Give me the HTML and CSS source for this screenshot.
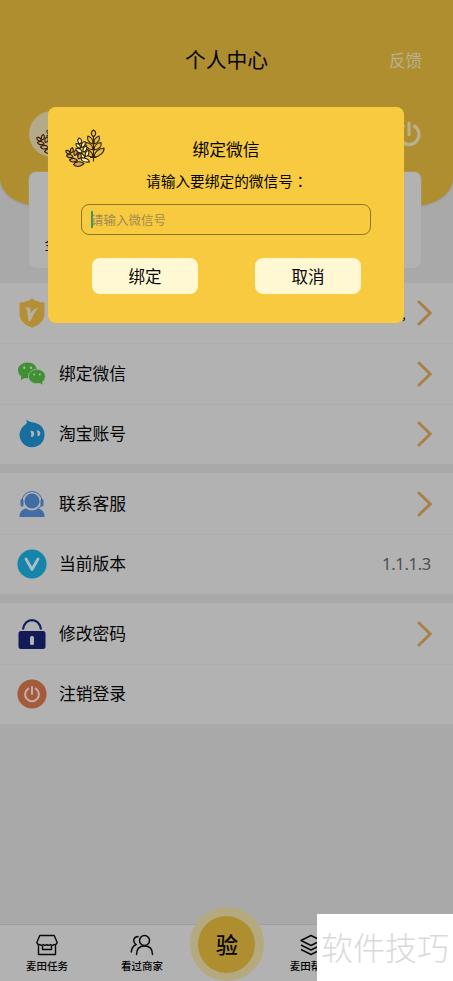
FILE: index.html
```html
<!DOCTYPE html>
<html lang="zh-CN">
<head>
<meta charset="utf-8">
<title>个人中心</title>
<link rel="stylesheet" href="styles.css">
</head>
<body>
<svg class="defs" width="0" height="0" aria-hidden="true">
  <symbol id="chevron" viewBox="0 0 16 26"><path d="M2 2 L13.2 13 L2 24" fill="none" stroke="#a98148" stroke-width="3" stroke-linecap="round" stroke-linejoin="miter"/></symbol>
  <symbol id="wheat" viewBox="0 0 40 40">
    <g stroke="#2b2108" stroke-width="1.1" stroke-linejoin="round" stroke-linecap="round">
      <g class="leaf-gold">
        <path d="M28.500 9C25 6 26 3.500 28.500 2C31 3.500 32 6 28.500 9ZM28 16C23 14.500 21.500 11 23 8C26 9 28.500 12 28 16ZM29 16C34 14.500 35.500 11 34 8C31 9 28.500 12 29 16ZM28 22C22 21 20 18 21 14.500C25 15 28 18 28 22ZM29 22C35 21 37 18 36 14.500C32 15 29 18 29 22ZM28 29C22 28.500 19 25 19.500 21C24 21 28 24.500 28 29ZM29 29C35 28.500 39.500 24 39 20C33 20.500 29 24.500 29 29Z"/>
        <path d="M28.500 8V33M25.500 29.500H31" fill="none"/>
      </g>
      <g fill="#fff3c4">
        <path d="M15 16C12 14.500 12.500 11.500 14 10C17 11 17.500 14 15 16ZM15.500 20C12 20 10.500 17.500 11 15.500C14 15.500 15.500 17.500 15.500 20ZM16.500 19.500C16 16 17.500 14 20 13.500C21 16 19.500 19 16.500 19.500ZM17 25C12 25 10.500 22.500 11 20.500C15 20 17 22 17 25ZM18 24C17.500 20 19 18.500 21.500 18C22.500 21 21 23.500 18 24ZM20 30C14 30.500 12 28 12 25.500C16 24.500 19.500 26.500 20 30ZM20.500 28.500C19.500 25 21 23 23.500 22.500C24.500 25.500 23.500 28 20.500 28.500ZM24.500 34C18 34.500 16 32.500 16 30C20 29.500 24 31 24.500 34Z"/>
      </g>
      <g fill="#dca067">
        <path d="M5 26C1.500 26 .500 24 1 22.500C4 22 5.500 24 5 26ZM6 25C4.500 22 5.500 20.500 7.500 19.500C9 22 8.500 24 6 25ZM8 29C4 30.500 2 29 1.500 27.500C4 25.500 7 26.500 8 29ZM9.500 27.500C8 24.500 9.500 22.500 11.500 22C13 24.500 12 27 9.500 27.500ZM12.500 32.500C8.500 35 5.500 34 4.500 32C7 29.500 10.500 30 12.500 32.500ZM13.500 31C12 28 13.500 26 15.500 25.500C17 28 16.500 30 13.500 31ZM19 35.500C15 39.500 11 39 8.500 36.500C11 33 16 33 19 35.500Z"/>
      </g>
    </g>
  </symbol>
</svg>
<div class="screen">
  <header class="hero">
    <div class="topbar">
      <span></span>
      <h1 class="title">个人中心</h1>
      <span class="feedback">反馈</span>
    </div>
    <div class="profile">
      <div class="avatar"><svg width="40" height="40"><use href="#wheat"/></svg></div>
      <svg class="power" width="26" height="26" viewBox="0 0 26 26"><path d="M13 2.2V13.600M7.500 5.200A10 10 0 1 0 18.500 5.200" fill="none" stroke="#b9b092" stroke-width="3.200" stroke-linecap="round"/></svg>
    </div>
  </header>
  <section class="summary">金</section>

  <main class="menu">
    <div class="group">
      <div class="row">
        <svg class="icon" width="30" height="30" viewBox="0 0 30 30"><path d="M15 .5Q20 4.200 27.500 4.500V16Q27 26 15 29.700Q3 26 2.500 16V4.500Q10 4.200 15 .5Z" fill="#b48f35"/><path d="M8 9.500H13.200L13.800 15.500Q16 11 21.500 9.500Q18 13 13.500 23H11.500L10 12Z" fill="#b5b1a4"/></svg>
        <span class="label"></span><span class="slash">,</span>
        <svg class="chev" width="16" height="26"><use href="#chevron"/></svg>
      </div>
      <div class="row">
        <svg class="icon" width="30" height="30" viewBox="0 0 30 30"><g fill="#3f9132"><path d="M10.500 3.500C5 3.500 1 7 1 11.500Q1 15 4.300 17.600L3.700 21L8 19Q18 21 20 11.500C20 7 16 3.500 10.500 3.500Z"/><path d="M20 10.200C15.500 10.200 11.500 13.200 11.500 17.600C11.500 22 15.500 24.800 20 24.800L22.700 24.500L26 26.200L25.500 23Q28.400 21 28.400 17.600C28.400 13.200 24.500 10.200 20 10.200Z" stroke="#b2b2b2" stroke-width=".8"/></g><g fill="#b2b2b2"><circle cx="7.300" cy="8.800" r="1.200"/><circle cx="14" cy="8.800" r="1.200"/><circle cx="17.200" cy="15.500" r="1"/><circle cx="22.800" cy="15.500" r="1"/></g></svg>
        <span class="label">绑定微信</span>
        <svg class="chev" width="16" height="26"><use href="#chevron"/></svg>
      </div>
      <div class="row">
        <svg class="icon" width="30" height="30" viewBox="0 0 30 30"><path d="M9 .800Q14 4 18 3.800Q27.500 6.500 27.500 15.800A12.500 12.200 0 1 1 8.500 5.600Q11 4 9 .800Z" fill="#176e9f"/><path d="M13.500 12Q17 11 17.200 14.500Q17 18 14 18Q15 15 13.500 12ZM19.500 11.500Q23 11 23.300 14Q23.500 17 20.500 17.200Q21.500 14.500 19.500 11.500Z" fill="#b2b8ba"/></svg>
        <span class="label">淘宝账号</span>
        <svg class="chev" width="16" height="26"><use href="#chevron"/></svg>
      </div>
    </div>
    <div class="group">
      <div class="row">
        <svg class="icon" width="30" height="30" viewBox="0 0 30 30"><g fill="#416da6"><circle cx="15" cy="12" r="7.500"/><path d="M2.500 28Q2.500 20.500 9 19.500Q15 23.500 21 19.500Q27.500 20.500 27.500 28Z"/><rect x="3.500" y="10" width="3" height="7.500" rx="1.500"/><rect x="23.500" y="10" width="3" height="7.500" rx="1.500"/></g><path d="M5 12A10 9.500 0 0 1 25 12M25 15Q24 18.500 20.500 19.700" fill="none" stroke="#416da6" stroke-width="1"/></svg>
        <span class="label">联系客服</span>
        <svg class="chev" width="16" height="26"><use href="#chevron"/></svg>
      </div>
      <div class="row">
        <svg class="icon" width="30" height="30" viewBox="0 0 30 30"><circle cx="15" cy="15" r="14.600" fill="#1685ac"/><path d="M9 10L15 20.500L21 10" fill="none" stroke="#b2bec1" stroke-width="2.700" stroke-linecap="round" stroke-linejoin="round"/></svg>
        <span class="label">当前版本</span>
        <span class="version">1.1.1.3</span>
      </div>
    </div>
    <div class="group">
      <div class="row">
        <svg class="icon" width="30" height="30" viewBox="0 0 30 30"><path d="M6 10.500C7 -2 23 -2 24 10.500" fill="none" stroke="#121b57" stroke-width="2.200"/><rect x="1.500" y="12" width="27" height="18" rx="2.500" fill="#121b57"/><rect x="13" y="17" width="4" height="9" rx="1.500" fill="#b2b2b2"/></svg>
        <span class="label">修改密码</span>
        <svg class="chev" width="16" height="26"><use href="#chevron"/></svg>
      </div>
      <div class="row">
        <svg class="icon" width="30" height="30" viewBox="0 0 30 30"><circle cx="15" cy="15" r="14.600" fill="#a65a3c"/><path d="M15 8V15M11.300 9.600A6.900 6.900 0 1 0 18.700 9.600" fill="none" stroke="#c0b0a8" stroke-width="2" stroke-linecap="round"/></svg>
        <span class="label">注销登录</span>
      </div>
    </div>
  </main>

  <nav class="tabs">
    <div class="tab">
      <svg width="24" height="22" viewBox="0 0 24 22" fill="none" stroke="#080808" stroke-width="1.400" stroke-linejoin="round"><path d="M4.800 1.500H19.200L22.200 8.500Q21.500 11 19 10.500Q17.500 12 15.500 10.500Q14 12 12 10.500Q10 12 8.500 10.500Q6.500 12 5 10.500Q2.500 11 1.800 8.500ZM3.500 11V20.500H20.500V11M7.500 12V15.500H16.500V12"/></svg>
      <span>麦田任务</span>
    </div>
    <div class="tab">
      <svg width="24" height="22" viewBox="0 0 24 22" fill="none" stroke="#080808" stroke-width="1.500" stroke-linecap="round"><circle cx="14.500" cy="6.500" r="5"/><path d="M6.500 20.500Q6.500 12 14.500 12Q22.500 12 22.500 20.500M8 2.500Q3.500 3 3.800 7Q4 9 6 10.500Q1.500 13 1.300 18"/></svg>
      <span>看过商家</span>
    </div>
    <div class="verify"><span>验</span></div>
    <div class="tab">
      <svg width="24" height="22" viewBox="0 0 24 22" fill="none" stroke="#080808" stroke-width="1.400" stroke-linejoin="round"><path d="M12 1.500L22 6.500L12 11.500L2 6.500ZM2 11L12 16L22 11M2 15.500L12 20.500L22 15.500"/></svg>
      <span>麦田帮</span>
    </div>
    <div class="tab"></div>
  </nav>

  <div class="dialog">
    <svg class="dialog-logo" width="40" height="40"><use href="#wheat"/></svg>
    <h2 class="dialog-title">绑定微信</h2>
    <p class="dialog-text">请输入要绑定的微信号<span class="colon" lang="zh-TW">：</span></p>
    <div class="field"><i class="caret"></i><span>请输入微信号</span></div>
    <div class="actions">
      <button class="btn">绑定</button>
      <button class="btn">取消</button>
    </div>
  </div>
  <div class="watermark">软件技巧</div>
</div>
</body>
</html>
```
FILE: styles.css
```css
* { box-sizing: border-box; }
body {
  margin: 0;
  font-family: "Noto Sans CJK SC", "Noto Sans", sans-serif;
  color: #050505;
  background: #a9a9a9;
}
h1, h2, p { margin: 0; font-weight: 400; }
.defs { position: absolute; }
.screen {
  position: relative;
  width: 453px;
  height: 981px;
  overflow: hidden;
  display: flex;
  flex-direction: column;
}
.hero {
  flex: none;
  height: 206px;
  background: #af8e2f;
  border-radius: 0 0 40px 40px / 0 0 28px 28px;
  box-shadow: 0 1px 2px #989383;
  padding: 39px 31px 0 29px;
}
.topbar {
  display: grid;
  grid-template-columns: 1fr auto 1fr;
  align-items: center;
  height: 40px;
}
.title { font-size: 20.8px; line-height: 40px; margin-left: 2px; }
.feedback { justify-self: end; font-size: 16.5px; color: #b9b092; padding-top: 1px; }
.profile {
  display: flex;
  justify-content: space-between;
  align-items: center;
  margin-top: 32px;
  height: 46px;
}
.avatar {
  width: 46px;
  height: 46px;
  border-radius: 50%;
  background: #b3aa89;
  padding: 4px 0 0 7px;
}
.avatar .leaf-gold, .leaf-gold { fill: #efbd3c; }
.summary {
  flex: none;
  height: 96px;
  margin: -34px 32px 0 29px;
  border-radius: 7px;
  background: #b2b2b2;
  box-shadow: 0 0 2px #aaa89f;
  padding: 60px 0 0 15.5px;
  font-size: 15px;
  line-height: 24px;
}
.menu {
  display: flex;
  flex-direction: column;
  gap: 9.5px;
  margin-top: 15px;
}
.group { background: #b2b2b2; }
.row {
  display: flex;
  align-items: center;
  height: 60.3px;
  padding: 0 20px 0 17px;
}
.row + .row { border-top: 1px solid #adadad; }
.icon { flex: none; }
.label { margin: -2px 0 0 12px; font-size: 16.8px; flex: 1; }
.slash { font-size: 13px; margin-right: 11.5px; }
.version {
  font-family: "Noto Sans", sans-serif;
  font-size: 16.5px;
  color: #505050;
  letter-spacing: -.3px;
  margin: -1px 2px 0 0;
}
.tabs {
  margin-top: auto;
  height: 57px;
  flex: none;
  display: grid;
  grid-template-columns: 95px 95px 73px 95px 95px;
  background: #b2b2b2;
  border-top: 1px solid #9e9e9e;
}
.tab {
  display: flex;
  flex-direction: column;
  align-items: center;
  padding: 9px 1px 0 0;
  font-size: 10.5px;
  line-height: 16px;
  font-weight: 500;
  gap: 2px;
}
.tab:nth-child(4) { padding-right: 0; }
.tab:nth-child(4) span { margin-right: 10px; }
.verify {
  justify-self: center;
  width: 74px;
  height: 74px;
  margin-top: -18px;
  border-radius: 50%;
  background: #b4a97f;
  display: grid;
  place-items: center;
}
.verify span {
  width: 57px;
  height: 57px;
  border-radius: 50%;
  background: #af8e2f;
  font-size: 22px;
  line-height: 54px;
  padding-left: 1px;
  font-weight: 500;
  text-align: center;
}
.dialog {
  position: absolute;
  left: 48px;
  top: 106.5px;
  width: 356px;
  height: 216.500px;
  border-radius: 8px;
  background: #f7ca40;
  box-shadow: 0 0 1px #d5b044;
  padding: 28px 33px 0;
  display: flex;
  flex-direction: column;
}
.dialog-logo { position: absolute; left: 17px; top: 21px; }
.dialog-title { font-size: 16.8px; line-height: 28px; text-align: center; }
.dialog-text { font-size: 14.700px; line-height: 24px; margin: 6px 0 0 65px; }
.colon { font-family: "Noto Sans CJK TC", sans-serif; }
.field {
  height: 31px;
  margin-top: 11.500px;
  border: 1px solid #8b752f;
  border-radius: 8px;
  display: flex;
  align-items: center;
  padding-left: 9px;
  font-size: 12.5px;
  color: #a18b50;
}
.caret { width: 2px; height: 17px; background: #349b64; margin-right: -2px; }
.actions {
  display: flex;
  justify-content: space-between;
  margin: 23px 10px 0 11px;
}
.btn {
  width: 106px;
  height: 36px;
  padding: 0;
  border: 0;
  border-radius: 8px;
  background: #fff8d3;
  color: #050505;
  font: 400 16.5px "Noto Sans CJK SC", sans-serif;
}
.watermark {
  position: absolute;
  right: 0;
  bottom: 0;
  width: 136px;
  height: 67px;
  background: #fff;
  color: #d9d9d9;
  font-size: 32px;
  line-height: 64px;
  text-align: center;
  font-weight: 300;
}
```
